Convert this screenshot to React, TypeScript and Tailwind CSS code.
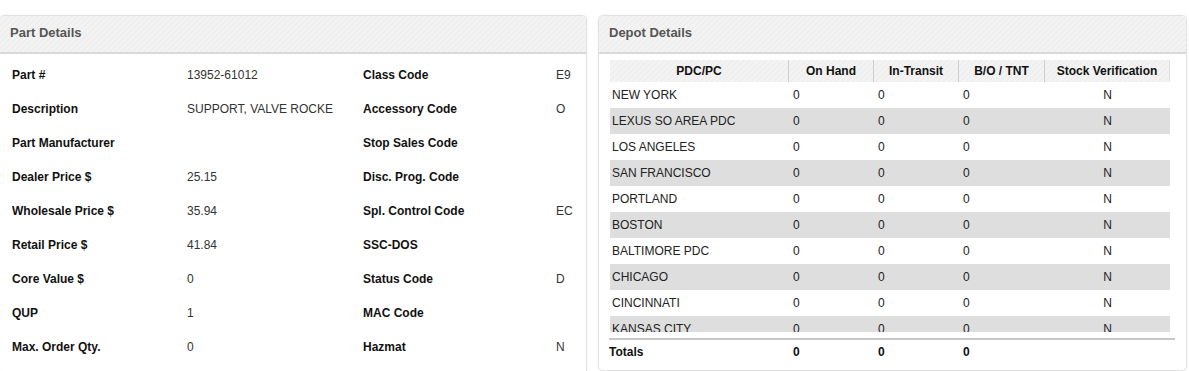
import React from "react";

const left: [string, string, string, string][] = [
  ["Part #", "13952-61012", "Class Code", "E9"],
  ["Description", "SUPPORT, VALVE ROCKE", "Accessory Code", "O"],
  ["Part Manufacturer", "", "Stop Sales Code", ""],
  ["Dealer Price $", "25.15", "Disc. Prog. Code", ""],
  ["Wholesale Price $", "35.94", "Spl. Control Code", "EC"],
  ["Retail Price $", "41.84", "SSC-DOS", ""],
  ["Core Value $", "0", "Status Code", "D"],
  ["QUP", "1", "MAC Code", ""],
  ["Max. Order Qty.", "0", "Hazmat", "N"],
];

const depots = [
  "NEW YORK",
  "LEXUS SO AREA PDC",
  "LOS ANGELES",
  "SAN FRANCISCO",
  "PORTLAND",
  "BOSTON",
  "BALTIMORE PDC",
  "CHICAGO",
  "CINCINNATI",
  "KANSAS CITY",
];

const stripe =
  "bg-[repeating-linear-gradient(135deg,#f3f3f3_0px,#f3f3f3_2px,#ececec_3px,#f3f3f3_4px)]";

function Header({ title }: { title: string }) {
  return (
    <div
      className={`h-[38px] flex items-center pb-[2px] px-[10px] rounded-t-[5px] border-b-2 border-[#dadada] ${stripe}`}
    >
      <span className="text-[13px] font-bold text-[#555]">{title}</span>
    </div>
  );
}

export default function App() {
  return (
    <div
      className="w-[1189px] h-[371px] bg-white pt-[15px] flex gap-[11px] overflow-hidden"
      style={{ fontFamily: '"Liberation Sans", Arial, sans-serif' }}
    >
      {/* Part Details */}
      <div className="w-[588px] h-[360px] -ml-px border border-[#e2e2e2] rounded-[5px] shadow-[0_0_2px_rgba(0,0,0,0.08)] flex flex-col">
        <Header title="Part Details" />
        <div className="pt-[4px] pl-[12px] text-[12px]">
          {left.map((r, i) => (
            <div key={i} className="h-[34px] grid grid-cols-[175px_176px_193px_1fr] items-center">
              <span className="font-bold text-[#111]">{r[0]}</span>
              <span className="text-[#333]">{r[1]}</span>
              <span className="font-bold text-[#111]">{r[2]}</span>
              <span className="text-[#333]">{r[3]}</span>
            </div>
          ))}
        </div>
      </div>

      {/* Depot Details */}
      <div className="w-[589px] h-[356px] border border-[#e2e2e2] rounded-[5px] shadow-[0_0_2px_rgba(0,0,0,0.08)] flex flex-col">
        <Header title="Depot Details" />
        <div className="pt-[6px] pl-[11px] pr-[11px] text-[12px] text-[#222]">
          <div className={`w-[560px] h-[22px] grid grid-cols-[179px_85px_85px_86px_1fr] font-bold text-[#111] ${stripe} bg-[#e6e6e6]`}>
            <div className="flex items-center justify-center border-r border-[#cfcfcf]">PDC/PC</div>
            <div className="flex items-center justify-center border-r border-[#cfcfcf]">On Hand</div>
            <div className="flex items-center justify-center border-r border-[#cfcfcf]">In-Transit</div>
            <div className="flex items-center justify-center border-r border-[#cfcfcf]">B/O / TNT</div>
            <div className="flex items-center justify-center border-r border-[#e0e0e0]">Stock Verification</div>
          </div>
          <div className="w-[560px] h-[250px] overflow-hidden">
            {depots.map((d, i) => (
              <div
                key={d}
                className={`h-[26px] grid grid-cols-[179px_85px_85px_86px_1fr] items-center ${
                  i % 2 === 1 ? "bg-[#dedede]" : "bg-white"
                }`}
              >
                <span className="pl-[2px]">{d}</span>
                <span className="pl-[4px]">0</span>
                <span className="pl-[4px]">0</span>
                <span className="pl-[4px]">0</span>
                <span className="text-center">N</span>
              </div>
            ))}
          </div>
          <div className="mt-[6px] w-[566px] border-t-2 border-[#c8c8c8] h-[25px] grid grid-cols-[179px_85px_85px_86px_1fr] items-center font-bold text-[#111] -ml-px">
            <span>Totals</span>
            <span className="pl-[5px]">0</span>
            <span className="pl-[5px]">0</span>
            <span className="pl-[5px]">0</span>
            <span></span>
          </div>
        </div>
      </div>
    </div>
  );
}
